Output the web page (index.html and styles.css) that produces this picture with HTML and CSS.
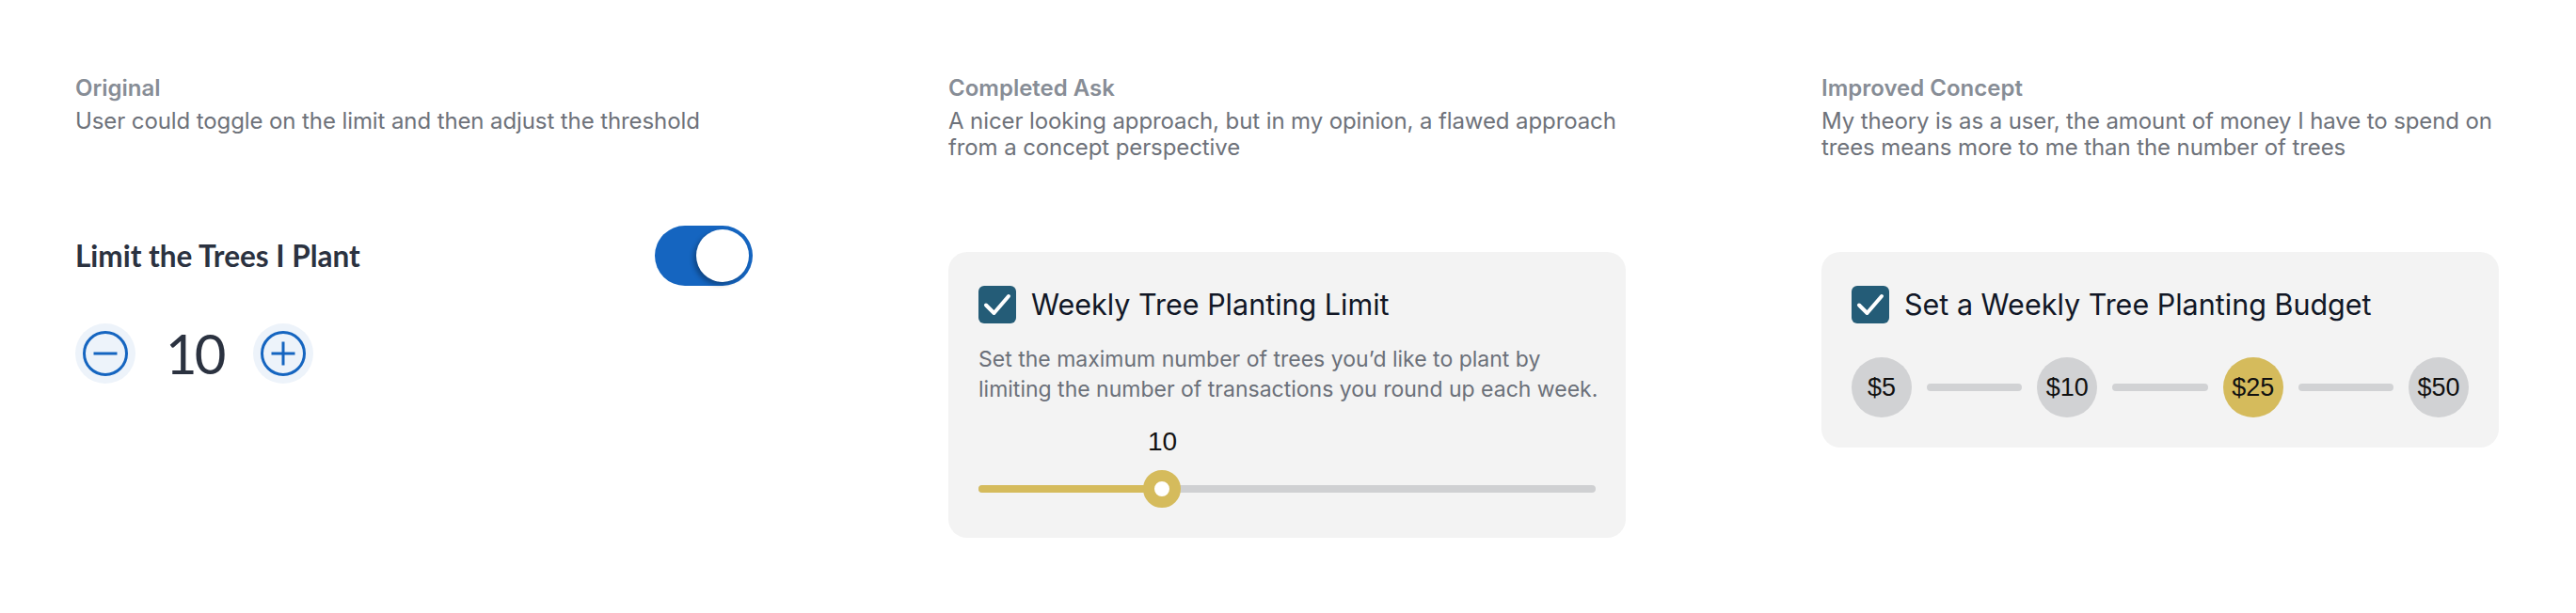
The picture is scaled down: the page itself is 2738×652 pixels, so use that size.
FILE: index.html
```html
<!DOCTYPE html>
<html lang="en">
<head>
<meta charset="utf-8">
<title>Tree Planting Limit Concepts</title>
<link rel="stylesheet" href="styles.css">
</head>
<body>
<main class="page">
  <section class="col">
    <header class="intro">
      <h2 class="intro-title">Original</h2>
      <p class="intro-text">User could toggle on the limit and then adjust the threshold</p>
    </header>
    <div class="demo">
      <div class="limit-row">
        <span class="limit-label">Limit the Trees I Plant</span>
        <div class="toggle" role="switch" aria-checked="true"><span class="toggle-knob"></span></div>
      </div>
      <div class="stepper">
        <button class="step-btn" aria-label="Decrease">
          <svg viewBox="0 0 48 48" width="48" height="48"><circle cx="24" cy="24" r="22.5" fill="none" stroke="#1565c0" stroke-width="3"/><line x1="11.5" y1="24" x2="36.5" y2="24" stroke="#1565c0" stroke-width="3"/></svg>
        </button>
        <span class="step-value">10</span>
        <button class="step-btn" aria-label="Increase">
          <svg viewBox="0 0 48 48" width="48" height="48"><circle cx="24" cy="24" r="22.5" fill="none" stroke="#1565c0" stroke-width="3"/><line x1="11.5" y1="24" x2="36.5" y2="24" stroke="#1565c0" stroke-width="3"/><line x1="24" y1="11.5" x2="24" y2="36.5" stroke="#1565c0" stroke-width="3"/></svg>
        </button>
      </div>
    </div>
  </section>

  <section class="col">
    <header class="intro">
      <h2 class="intro-title">Completed Ask</h2>
      <p class="intro-text">A nicer looking approach, but in my opinion, a flawed approach<br>from a concept perspective</p>
    </header>
    <div class="demo card">
      <div class="card-head">
        <span class="check"><svg viewBox="0 0 40 40" width="40" height="40"><path d="M8 20.5 L16.5 29 L32 11" fill="none" stroke="#fff" stroke-width="4" stroke-linecap="round" stroke-linejoin="round"/></svg></span>
        <span class="card-title">Weekly Tree Planting Limit</span>
      </div>
      <p class="card-text">Set the maximum number of trees you’d like to plant by<br>limiting the number of transactions you round up each week.</p>
      <div class="slider" style="--pos: 29.8%">
        <div class="slider-value-row"><span class="slider-value">10</span></div>
        <div class="slider-track"><span class="slider-fill"></span><span class="slider-thumb"></span></div>
      </div>
    </div>
  </section>

  <section class="col">
    <header class="intro">
      <h2 class="intro-title">Improved Concept</h2>
      <p class="intro-text">My theory is as a user, the amount of money I have to spend on<br>trees means more to me than the number of trees</p>
    </header>
    <div class="demo card">
      <div class="card-head">
        <span class="check"><svg viewBox="0 0 40 40" width="40" height="40"><path d="M8 20.5 L16.5 29 L32 11" fill="none" stroke="#fff" stroke-width="4" stroke-linecap="round" stroke-linejoin="round"/></svg></span>
        <span class="card-title">Set a Weekly Tree Planting Budget</span>
      </div>
      <div class="budget">
        <span class="budget-opt">$5</span>
        <span class="budget-line"></span>
        <span class="budget-opt">$10</span>
        <span class="budget-line"></span>
        <span class="budget-opt is-active">$25</span>
        <span class="budget-line"></span>
        <span class="budget-opt">$50</span>
      </div>
    </div>
  </section>
</main>
</body>
</html>
```

FILE: styles.css
```css
html, body {
  margin: 0;
  background: #ffffff;
}

body {
  font-family: Inter, "Noto Sans", sans-serif;
  -webkit-font-smoothing: antialiased;
}

.page {
  display: grid;
  grid-template-columns: repeat(3, 720px);
  column-gap: 208px;
  padding: 80px 0 0 80px;
  align-items: start;
}

.col {
  display: flex;
  flex-direction: column;
}

.intro-title {
  margin: 0;
  font-size: 24px;
  line-height: 28px;
  font-weight: 600;
  color: #878d96;
}

.intro-text {
  margin: 7px 0 0;
  font-size: 24px;
  line-height: 28px;
  font-weight: 400;
  color: #6e727a;
  white-space: nowrap;
  letter-spacing: -0.1px;
}

.demo {
  margin-top: 97px;
}

/* Original */
.limit-row {
  display: flex;
  align-items: center;
  justify-content: space-between;
}

.limit-label {
  font-family: Lato, "Open Sans", sans-serif;
  font-weight: 700;
  font-size: 31.5px;
  line-height: 36px;
  color: #2b3240;
}

.toggle {
  width: 104px;
  height: 64px;
  box-sizing: border-box;
  padding: 4px;
  border-radius: 32px;
  background: #1565c0;
  display: flex;
  justify-content: flex-end;
}

.toggle-knob {
  width: 56px;
  height: 56px;
  border-radius: 50%;
  background: #ffffff;
  box-shadow: -3px 3px 5px rgba(0, 0, 0, 0.3);
}

.stepper {
  margin-top: 40px;
  display: flex;
  align-items: center;
  gap: 32px;
}

.step-btn {
  width: 64px;
  height: 64px;
  padding: 0;
  border: 0;
  border-radius: 50%;
  background: #edf3fa;
  display: grid;
  place-items: center;
}

.step-btn svg {
  display: block;
}

.step-value {
  font-family: Lato, "Open Sans", sans-serif;
  font-weight: 400;
  font-size: 58px;
  line-height: 64px;
  letter-spacing: -3px;
  color: #2b3240;
}

/* Cards */
.card {
  background: #f3f3f3;
  border-radius: 20px;
  padding: 32px;
}

.card-head {
  display: flex;
  align-items: center;
  gap: 16px;
  height: 48px;
}

.check {
  flex: none;
  width: 40px;
  height: 40px;
  border-radius: 6px;
  background: #245c77;
}

.check svg {
  display: block;
}

.card-title {
  font-size: 30.5px;
  line-height: 48px;
  font-weight: 400;
  color: #111726;
  white-space: nowrap;
}

.card-text {
  margin: 18px 0 0;
  font-size: 23px;
  line-height: 32px;
  color: #6b7079;
  white-space: nowrap;
}

.slider {
  margin-top: 24px;
}

.slider-value-row {
  position: relative;
  height: 32px;
}

.slider-value {
  position: absolute;
  top: 0;
  left: var(--pos);
  transform: translateX(-50%);
  font-family: "Liberation Sans", Arial, sans-serif;
  font-size: 28px;
  line-height: 32px;
  color: #111111;
}

.slider-track {
  position: relative;
  height: 40px;
  margin-top: 14px;
}

.slider-track::before {
  content: "";
  position: absolute;
  left: 0;
  right: 0;
  top: 16px;
  height: 8px;
  border-radius: 4px;
  background: #cfd0d2;
}

.slider-fill {
  position: absolute;
  left: 0;
  top: 16px;
  height: 8px;
  width: var(--pos);
  border-radius: 4px;
  background: #d5bb5c;
}

.slider-thumb {
  position: absolute;
  top: 0;
  left: var(--pos);
  width: 40px;
  height: 40px;
  margin-left: -20px;
  box-sizing: border-box;
  border: 12px solid #d5bb5c;
  border-radius: 50%;
  background: #ffffff;
}

.budget {
  margin-top: 32px;
  display: flex;
  align-items: center;
  gap: 16px;
}

.budget-opt {
  flex: none;
  width: 64px;
  height: 64px;
  border-radius: 50%;
  background: #d1d2d4;
  display: grid;
  place-items: center;
  font-family: "Liberation Sans", Arial, sans-serif;
  font-size: 27px;
  color: #111111;
}

.budget-opt.is-active {
  background: #d5bb5c;
}

.budget-line {
  flex: 1;
  height: 8px;
  border-radius: 4px;
  background: #d1d2d4;
}
```
